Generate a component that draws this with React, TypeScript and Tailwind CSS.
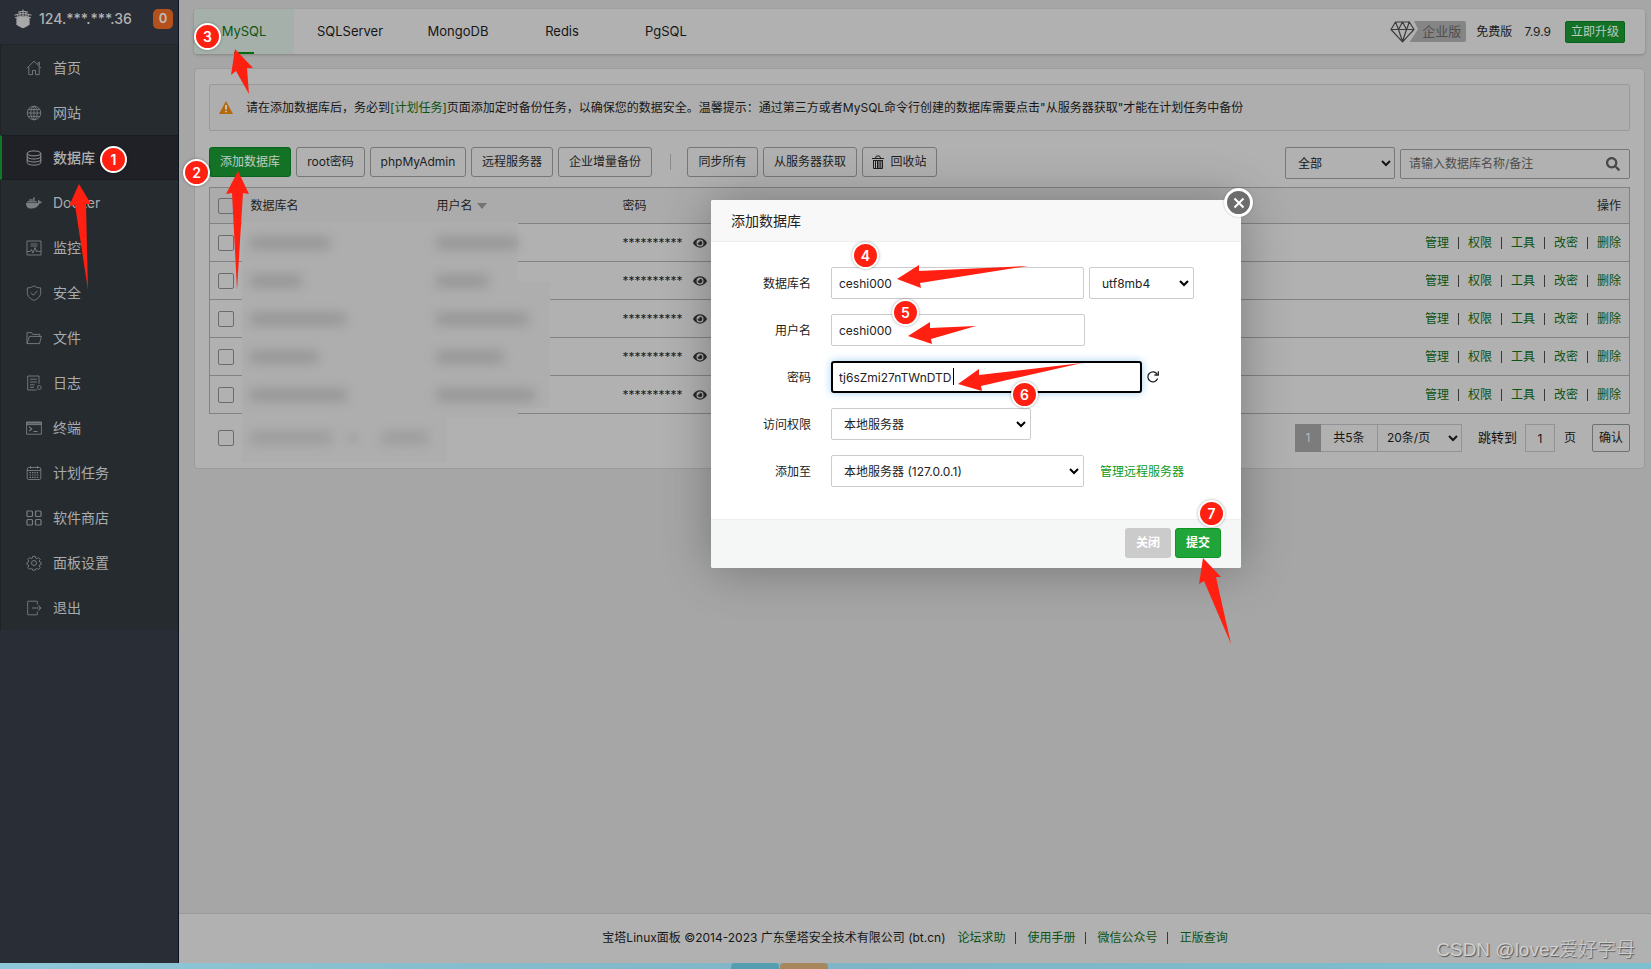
import React, { useState } from "react";
import { FaDocker, FaEye, FaSearch } from "react-icons/fa";

const sans = "font-['Inter','Noto_Sans_CJK_SC',sans-serif]";

function LineIcon({ children }: { children: React.ReactNode }) {
  return (
    <svg viewBox="0 0 16 16" className="size-4 shrink-0" fill="none" stroke="currentColor" strokeWidth="0.9" aria-hidden="true">
      {children}
    </svg>
  );
}

const menu: { label: string; icon: React.ReactNode }[] = [
  { label: "首页", icon: <LineIcon><path d="M.8 8.3 8 1.2l7.2 7.1M2.8 7v7.6h3.7v-4.2h3v4.2h3.7V7M12.2 4.6V2.4h1.2v3.3" /></LineIcon> },
  { label: "网站", icon: <LineIcon><circle cx="8" cy="8" r="6.8" /><ellipse cx="8" cy="8" rx="3.2" ry="6.8" /><path d="M8 1.2v13.6M1.2 8h13.6M2.2 4.6h11.6M2.2 11.4h11.6" /></LineIcon> },
  { label: "数据库", icon: <LineIcon><ellipse cx="8" cy="3.4" rx="6.8" ry="2.5" /><path d="M1.2 3.4v9.2c0 1.4 3 2.5 6.8 2.5s6.8-1.1 6.8-2.5V3.4M1.2 6.5C1.2 7.900 4.200 9 8 9s6.800-1.100 6.800-2.500M1.200 9.500C1.200 10.900 4.200 12 8 12s6.800-1.100 6.800-2.500" /></LineIcon> },
  { label: "Docker", icon: <FaDocker className="size-4 shrink-0" /> },
  { label: "监控", icon: <LineIcon><path d="M1 1h14v14H1zM4.500 4h7M4.500 6h7M1 11.500h3.300l1.200-2 1.500 3.500 2-5.500 1.500 4.500 1-1.500 1 1H15" /></LineIcon> },
  { label: "安全", icon: <LineIcon><path d="M8 .8c2 1.400 4.300 2.100 6.700 2.100v4.600c0 3.600-2.700 6.400-6.700 7.900-4-1.500-6.700-4.300-6.700-7.900V2.900C3.700 2.900 6 2.200 8 .8zM4.800 7.700l2.500 2.500 4.100-4.300" /></LineIcon> },
  { label: "文件", icon: <LineIcon><path d="M1 13.600V2.600h4.600l1.200 1.800h7v2M1 13.600 3.400 6.400h12l-1.900 7.200z" /></LineIcon> },
  { label: "日志", icon: <LineIcon><path d="M13 8.800V1H1.700v14h9M4 4.200h6.800M4 7h6.800M4 9.800h4.500M4 12.300h4" /><circle cx="13.300" cy="12.500" r="1.900" /></LineIcon> },
  { label: "终端", icon: <LineIcon><path d="M.6 2.200h14.800v12H.6z" /><path d="M.6 2.200h14.800v2.400H.6z" fill="currentColor" fillOpacity=".6" /><path d="m3.200 6.700 2.500 2.200-2.500 2.200M7.500 11.500h4" strokeWidth="1.200" /></LineIcon> },
  { label: "计划任务", icon: <LineIcon><rect x="1.200" y="2.500" width="13.600" height="12" rx="1.500" /><path d="M1.200 5.500h13.600M4.500 1v2.500M11.500 1v2.500" /><path d="M3.600 7.700h9M3.600 10h9M3.600 12.300h9" strokeDasharray="1.400 1" strokeWidth="1.200" /></LineIcon> },
  { label: "软件商店", icon: <LineIcon><g strokeWidth="1.200"><rect x="1" y="1" width="5.500" height="5.500" rx="1" /><rect x="9.500" y="1" width="5.500" height="5.500" rx="1" /><rect x="1" y="9.500" width="5.500" height="5.500" rx="1" /><rect x="9.500" y="9.500" width="5.500" height="5.500" rx="1" /></g></LineIcon> },
  { label: "面板设置", icon: <LineIcon><circle cx="8" cy="8" r="2.500" /><path d="M6.700 1.300h2.600l.4 1.800 1.100.5 1.600-1 1.800 1.800-1 1.600.5 1.100 1.500.4v2l-1.500.4-.5 1.100 1 1.600-1.800 1.800-1.600-1-1.100.5-.4 1.300H6.700l-.4-1.300-1.100-.5-1.600 1-1.800-1.800 1-1.600-.5-1.100-1.300-.4v-2l1.300-.4.5-1.100-1-1.600 1.800-1.800 1.600 1 1.100-.5z" /></LineIcon> },
  { label: "退出", icon: <LineIcon><path d="M11.300 4.500V1.200H1.700v13.600h9.600v-3.300M6 8h9M12.300 5.300 15 8l-2.700 2.700" /></LineIcon> },
];

function Chevron({ className = "" }: { className?: string }) {
  return (
    <svg viewBox="0 0 10 8" className={"pointer-events-none absolute top-1/2 h-2 w-2.5 -translate-y-1/2 " + className} fill="none" stroke="currentColor" strokeWidth="2" aria-hidden="true">
      <path d="m1 2 4 4 4-4" />
    </svg>
  );
}

function Sidebar() {
  return (
    <aside className="w-[179px] shrink-0 border-r border-[#08131d] bg-[#292d36]">
      <div className="flex h-[45px] items-center border-b border-[#22262c] pr-[5px] pb-[7px] pl-3.5">
        <svg viewBox="0 0 18 20" className="h-5 w-[18px] shrink-0" fill="#a8a8a8" aria-hidden="true">
          <path d="M2.400 8.800 9 7.300l6.600 1.500v6.500C14.500 17 11.500 18.500 9 19.200 6.500 18.500 3.500 17 2.400 15.300z" />
          <path d="M4 3.200 9 2.200l5 1M.5 6.200C3 5.200 6 4.800 9 4.600c3 .2 6 .6 8.500 1.600M1 8.800 9 6.800l8 2M9 .5v6M6 3v5M12 3v5M3.800 5v3.500M14.200 5v3.500" fill="none" stroke="#a8a8a8" strokeWidth="1" />
        </svg>
        <span className="ml-[7px] text-[14px] font-medium text-[#b0b2b4]">124.***.***.36</span>
        <span className="ml-auto flex size-5 items-center justify-center rounded-[5px] bg-[#b4511d] text-[13px] font-semibold text-[#c4bcb6]">0</span>
      </div>
      <nav className="border-l border-[#202226] bg-[#262b2f]">
        {menu.map((m) => (
          <a
            key={m.label}
            href="#"
            className={
              "flex h-[45px] items-center gap-[11px] text-[14px] " +
              (m.label === "数据库" ? "-ml-px border-y border-l-2 border-y-[#191c21] border-l-[#0d7a24] bg-[#1f2127] pl-6 font-medium text-[#b0b0b0]" : "pl-[25px] text-[#a9acae]")
            }
          >
            <span className={m.label === "数据库" ? "text-[#a0a0a0]" : "text-[#7b7f82]"}>{m.icon}</span>
            {m.label}
          </a>
        ))}
      </nav>
    </aside>
  );
}

const tabs = [
  { label: "MySQL", width: "w-[100px]" },
  { label: "SQLServer", width: "w-[112px]" },
  { label: "MongoDB", width: "w-[104px]" },
  { label: "Redis", width: "w-[104px]" },
  { label: "PgSQL", width: "w-[104px]" },
];

function TopBar() {
  return (
    <header className="flex h-[45px] items-center justify-between rounded bg-[#b1b1b1] pr-5 shadow-[0_1px_3px_rgba(0,0,0,0.22)]">
      <div className="flex h-full">
        {tabs.map((t, i) => (
          <button
            key={t.label}
            type="button"
            className={"relative flex h-full items-center justify-center text-[13px] " + t.width + (i === 0 ? " rounded-l bg-[#a6b0aa] text-[#0b5513]" : " text-[#161616]")}
          >
            {t.label}
            {i === 0 && <span className="absolute bottom-0 left-10 h-0.5 w-5 bg-[#056a0c]" />}
          </button>
        ))}
      </div>
      <div className="flex items-center text-xs text-[#1c1c1c]">
        <div className="flex items-center">
          <svg viewBox="0 0 28 22" className="z-10 h-[22px] w-7" fill="none" stroke="#3c3c3c" strokeWidth="1.200" strokeLinejoin="round" aria-hidden="true">
            <path d="M20 0h4l4 8-9 14h-5z" fill="#b1b1b1" stroke="none" />
            <path d="M5.500 1h13.800L24 8.500 12.500 20.800 1 8.500zM1 8.500h23M5.500 1l3 7.500 4 12 4-12 2.800-7.500M8.500 8.500 12.500 1l4 7.500" />
          </svg>
          <span className="-ml-2.5 flex h-[21px] w-[58px] items-center justify-end rounded-r-xs bg-[#858585] pr-[5px] text-[13px] text-[#505050]">
            企业版
          </span>
        </div>
        <span className="ml-2.5">免费版</span>
        <span className="ml-3">7.9.9</span>
        <button type="button" className="ml-3.5 h-[22px] w-[60px] rounded-xs border border-[#06651a] bg-[#147227] text-xs text-[#bccabf]">
          立即升级
        </button>
      </div>
    </header>
  );
}

const toolButtons = [
  { label: "root密码", width: "w-[69px]" },
  { label: "phpMyAdmin", width: "w-24" },
  { label: "远程服务器", width: "w-[82px]" },
  { label: "企业增量备份", width: "w-[94px]" },
];
const outline = "h-[30px] rounded-[3px] border border-[#777] text-xs text-[#1e1e1e] ";

function Toolbar() {
  return (
    <div className="flex items-start justify-between">
      <div className="flex items-center gap-[5px]">
        <button type="button" className="h-[30px] w-[82px] rounded-[3px] border border-[#06651a] bg-[#147227] text-xs text-[#c0cdc3]">添加数据库</button>
        {toolButtons.map((b) => (
          <button key={b.label} type="button" className={outline + b.width}>{b.label}</button>
        ))}
        <span className="mr-[11px] ml-[13px] h-4 w-px bg-[#8c8c8c]" />
        <button type="button" className={outline + "w-[71px]"}>同步所有</button>
        <button type="button" className={outline + "w-[94px]"}>从服务器获取</button>
        <button type="button" className={outline + "flex w-[75px] items-center justify-center gap-1.5"}>
          <svg viewBox="0 0 12 14" className="h-3.5 w-3" fill="none" stroke="currentColor" aria-hidden="true">
            <path d="M0 3.500h12M1.500 5.500h9M3.500 3l1-2h3l1 2M1.500 5v8.500h9V5M3.500 6v7M5.500 6v7M7 6v7M8.800 6v7" />
          </svg>
          回收站
        </button>
      </div>
      <div className="flex items-end gap-[5px]">
        <div className="relative text-[#161616]">
          <select aria-label="分类" className="h-8 w-[110px] appearance-none rounded-xs border border-[#777] bg-transparent pt-px pl-3 text-xs">
            <option>全部</option>
          </select>
          <Chevron className="right-1" />
        </div>
        <div className="flex h-[30px] w-[230px] items-center rounded-xs border border-[#777] pr-[9px] pl-2">
          <input aria-label="搜索数据库" placeholder="请输入数据库名称/备注" className="w-full min-w-0 bg-transparent text-xs outline-none placeholder:text-[#4c4c4c]" />
          <FaSearch className="size-3.5 shrink-0 text-[#484848]" />
        </div>
      </div>
    </div>
  );
}

function Check({ label }: { label: string }) {
  return <input type="checkbox" aria-label={label} className="block size-4 appearance-none rounded-xs border border-[#6c6c6c]" />;
}

const actions = ["管理", "权限", "工具", "改密", "删除"];

function DatabaseTable() {
  return (
    <table className="w-full table-fixed border-collapse border border-[#828282] text-left text-xs text-[#1e1e1e]">
      <colgroup>
        <col className="w-[33px]" />
        <col className="w-[186px]" />
        <col className="w-[186px]" />
        <col className="w-[186px]" />
        <col />
      </colgroup>
      <thead>
        <tr className="h-9 bg-[#ababab]">
          <th className="pl-2 font-normal"><Check label="全选" /></th>
          <th className="px-2 font-normal">数据库名</th>
          <th className="px-2 font-normal">
            <span className="flex items-center gap-1">
              用户名
              <svg viewBox="0 0 10 6" className="h-1.5 w-2.5" fill="#747474" aria-hidden="true"><path d="M0 0h10L5 6z" /></svg>
            </span>
          </th>
          <th className="px-2 font-normal">密码</th>
          <th className="px-2 text-right font-normal">操作</th>
        </tr>
      </thead>
      <tbody>
        {[1, 2, 3, 4, 5].map((n) => (
          <tr key={n} className="h-[38px] border-t border-[#828282]">
            <td className="pl-2"><Check label={"选择第" + n + "行"} /></td>
            <td />
            <td />
            <td className="px-2">
              <span className="flex items-center gap-2">
                <span className="w-[62px]">**********</span>
                <FaEye className="size-3.5 text-[#2c2c2c]" />
              </span>
            </td>
            <td className="px-2">
              <span className="flex items-center justify-end gap-2">
                {actions.map((a, i) => (
                  <React.Fragment key={a}>
                    {i > 0 && <span className="h-3 w-px bg-[#3a3a3a] mx-px" />}
                    <a href="#" className="text-[#0c5212]">{a}</a>
                  </React.Fragment>
                ))}
              </span>
            </td>
          </tr>
        ))}
      </tbody>
    </table>
  );
}

const smudges = [
  [80, 82],
  [52, 52],
  [96, 92],
  [68, 68],
  [97, 99],
];

function MaskedCells() {
  return (
    <div className="pointer-events-none absolute top-[35px] left-[33px]" aria-hidden="true">
      <div className="h-[60px] w-[276px] bg-[#aeaeae]" />
      <div className="h-[126px] w-[308px] bg-[#aeaeae]" />
      <div className="h-2.5 w-[276px] bg-[#aeaeae]" />
      <div className="h-11 w-[205px] bg-[#aeaeae]" />
      <div className="absolute inset-x-2 top-0.5">
        {smudges.map(([a, b], i) => (
          <div key={i} className="flex h-[38px] items-center">
            <div className="w-[186px] shrink-0"><div className="h-3 bg-[#8e8f90] opacity-80 blur-[6px]" style={{ width: a }} /></div>
            <div className="h-3 shrink-0 bg-[#8e8f90] opacity-80 blur-[6px]" style={{ width: b }} />
          </div>
        ))}
        <div className="flex h-12 items-center">
          <div className="h-3 w-[82px] bg-[#969696] opacity-80 blur-[6px]" />
          <div className="ml-4 h-2.5 w-2.5 bg-[#969696] opacity-50 blur-xs" />
          <div className="ml-6 h-3 w-[46px] bg-[#969696] opacity-80 blur-[6px]" />
        </div>
      </div>
    </div>
  );
}

function Pagination() {
  return (
    <div className="flex items-center justify-between pl-[9px] text-xs text-[#161616]">
      <Check label="批量选择" />
      <div className="flex items-center">
        <span className="flex h-7 w-[26px] items-center justify-center bg-[#7c7c7c] text-[#b9b9b9]">1</span>
        <span className="flex h-7 w-14 items-center justify-center border-y border-[#929292]">共5条</span>
        <div className="relative">
          <select aria-label="每页条数" className="h-7 w-[85px] appearance-none border border-[#929292] bg-transparent pl-[9px]">
            <option>20条/页</option>
          </select>
          <Chevron className="right-1" />
        </div>
        <label htmlFor="jump" className="mr-2 ml-4 text-[13px]">跳转到</label>
        <input id="jump" defaultValue="1" className="h-7 w-[30px] border border-[#929292] bg-transparent text-center" />
        <span className="mx-[9px]">页</span>
        <button type="button" className="ml-[7px] h-7 w-[38px] rounded-xs border border-[#6f6f6f]">确认</button>
      </div>
    </div>
  );
}

const field = "h-8 rounded-xs border border-[#ccc] bg-white text-xs text-[#222] outline-none ";

function FormRow({ id, label, children }: { id: string; label: string; children: React.ReactNode }) {
  return (
    <div className="flex items-center">
      <label htmlFor={id} className="mr-5 w-[100px] pt-px text-right text-xs text-[#222]">{label}</label>
      {children}
    </div>
  );
}

function SelectBox({ id, width, value, name }: { id: string; width: string; value: string; name?: string }) {
  return (
    <div className={"relative " + width}>
      <select id={id} aria-label={name} className={field + "w-full appearance-none pt-px pl-3"}>
        <option>{value}</option>
      </select>
      <Chevron className="right-[5px]" />
    </div>
  );
}

function AddDialog() {
  const [pwd, setPwd] = useState("tj6sZmi27nTWnDTD");
  return (
    <div role="dialog" aria-labelledby="dialog-title" className="absolute top-[200px] left-[711px] w-[530px] rounded-xs bg-white shadow-[1px_1px_50px_rgba(0,0,0,0.3)]">
      <button type="button" aria-label="关闭窗口" className="absolute -top-3 -right-3 flex size-[29px] items-center justify-center rounded-full border-3 border-white bg-[#6d6d6d] shadow-[0_0_2px_rgba(0,0,0,0.3)]">
        <svg viewBox="0 0 12 12" className="size-3" stroke="#fff" strokeWidth="2" aria-hidden="true"><path d="m1.500 1.500 9 9M10.500 1.500l-9 9" /></svg>
      </button>
      <h2 id="dialog-title" className="flex h-[42px] items-center rounded-t-xs border-b border-[#eee] bg-[#f8f8f8] pl-5 text-[14px] text-[#222]">添加数据库</h2>
      <form onSubmit={(e) => e.preventDefault()}>
        <div className="flex flex-col gap-[15px] pt-[25px] pb-8">
          <FormRow id="db" label="数据库名">
            <input id="db" defaultValue="ceshi000" className={field + "w-[253px] pl-[7px]"} />
            <span className="w-[5px]" />
            <SelectBox id="charset" name="字符集" width="w-[105px]" value="utf8mb4" />
          </FormRow>
          <FormRow id="user" label="用户名">
            <input id="user" defaultValue="ceshi000" className={field + "w-[254px] pl-[7px]"} />
          </FormRow>
          <FormRow id="pwd" label="密码">
            <div className="relative">
              <input id="pwd" value={pwd} onChange={(e) => setPwd(e.target.value)} className="h-8 w-[311px] rounded-[3px] border-2 border-black bg-white pl-1.5 text-xs text-[#222] shadow-[0_0_8px_rgba(102,175,233,0.6)] outline-none" />
              <span className="absolute top-[7px] left-[122px] h-[17px] w-px bg-black" />
            </div>
            <svg viewBox="0 0 12 12" className="ml-[5px] size-3" fill="none" stroke="#222" strokeWidth="1.300" aria-hidden="true">
              <path d="M10.600 7.600A5 5 0 1 1 10.200 3.300" /><path d="M7.400 4h3.900V.3" />
            </svg>
          </FormRow>
          <FormRow id="access" label="访问权限">
            <SelectBox id="access" width="w-[200px]" value="本地服务器" />
          </FormRow>
          <FormRow id="server" label="添加至">
            <SelectBox id="server" width="w-[253px]" value="本地服务器 (127.0.0.1)" />
            <a href="#" className="ml-4 pt-px text-xs text-[#109a22]">管理远程服务器</a>
          </FormRow>
        </div>
        <div className="flex h-[49px] items-center justify-end gap-1 rounded-b-xs border-t border-[#edf0ef] bg-[#f5f7f7] pr-5 pb-0.5">
          <button type="button" className="h-[30px] w-[46px] rounded-[3px] bg-[#cbcbcb] text-xs font-bold text-white">关闭</button>
          <button type="submit" className="h-[30px] w-[46px] rounded-[3px] border border-[#109520] bg-[#20a53a] text-xs font-bold text-white">提交</button>
        </div>
      </form>
    </div>
  );
}

const arrows = [
  "79,184 91,204 86,204 88,290 75,205 69,206",
  "238,171 249,194 243,193 237,290 232,193 226,194",
  "235,49 253,68 247,68 249,94 236,71 231,75",
  "897,279 919,265 919,271 1028,266 920,283 921,288",
  "908,336 930,322 930,328 976,326 931,339 932,344",
  "958,384 979,369 979,375 1082,363 981,386 982,391",
  "1203,558 1221,577 1216,577 1231,644 1204,581 1199,584",
];

const steps = [
  "left-[100px] top-[146px]",
  "left-[183px] top-[159px]",
  "left-[194px] top-[23px]",
  "left-[852px] top-[242px]",
  "left-[892px] top-[299px]",
  "left-[1011px] top-[381px]",
  "left-[1198px] top-[500px]",
];

function Annotations() {
  return (
    <div className="pointer-events-none absolute top-0 left-0">
      <svg width="1" height="1" className="overflow-visible" fill="#ff2012" aria-hidden="true">
        {arrows.map((p) => <polygon key={p} points={p} />)}
      </svg>
      {steps.map((pos, i) => (
        <span key={pos} className={"absolute flex size-[27px] items-center justify-center rounded-full border-2 border-white bg-[#ff2012] text-[14px] font-semibold text-white shadow-[0_0_3px_rgba(0,0,0,0.35)] " + pos}>
          {i + 1}
        </span>
      ))}
    </div>
  );
}

const footLinks = ["论坛求助", "使用手册", "微信公众号", "正版查询"];

export default function App() {
  return (
    <div className={"relative flex min-h-screen flex-col overflow-hidden bg-[#a6a6a6] " + sans}>
      <div className="flex flex-1">
        <Sidebar />
        <div className="flex min-w-0 flex-1 flex-col">
          <main className="flex flex-1 flex-col gap-[14px] pt-[9px] pr-1.5 pl-[15px]">
            <TopBar />
            <section className="rounded border border-[#9b9b9b] bg-[#b1b1b1] px-3.5 pt-[15px] pb-4">
              <div className="mb-4 flex h-[47px] items-center gap-[13px] rounded-xs border border-[#999] bg-[#aeaeae] pl-[9px] text-xs text-[#161616]">
                <svg viewBox="0 0 14 13" className="h-[13px] w-3.5" aria-hidden="true">
                  <path d="M7 0l7 13H0z" fill="#b5690c" />
                  <path d="M7 4v4.500M7 9.700v1.600" stroke="#ccc" strokeWidth="1.700" />
                </svg>
                <p>
                  请在添加数据库后，务必到<a href="#" className="text-[#0c5212]">[计划任务]</a>页面添加定时备份任务，以确保您的数据安全。温馨提示：通过第三方或者MySQL命令行创建的数据库需要点击"从服务器获取"才能在计划任务中备份
                </p>
              </div>
              <Toolbar />
              <div className="relative mt-2 mb-2.5">
                <DatabaseTable />
                <MaskedCells />
              </div>
              <Pagination />
            </section>
          </main>
          <footer className="flex h-[50px] items-center justify-center border-t border-[#999] bg-[#b1b1b1] pb-0.5 text-xs text-[#161616]">
            <span className="mr-3">宝塔Linux面板 ©2014-2023 广东堡塔安全技术有限公司 (bt.cn)</span>
            {footLinks.map((l, i) => (
              <React.Fragment key={l}>
                {i > 0 && <span className="mr-3 ml-[9px] h-3 w-px bg-[#3a3a3a]" />}
                <a href="#" className="text-[#0c5212]">{l}</a>
              </React.Fragment>
            ))}
          </footer>
        </div>
      </div>
      <div className="flex h-1.5 bg-linear-to-r from-[#8fc8d8] via-[#7fb5c6] to-[#7cc0cf] pl-[731px]">
        <span className="h-full w-12 rounded-t bg-[#559db0]" />
        <span className="ml-px h-full w-12 rounded-t bg-[#a8875c]" />
      </div>
      <AddDialog />
      <Annotations />
      <span className="absolute right-4 bottom-[5px] font-['Liberation_Sans','Noto_Sans_CJK_SC',sans-serif] text-[19px] font-light text-[#d0d0d0] [text-shadow:1px_1px_1px_#555]">
        CSDN @lovez爱好字母
      </span>
    </div>
  );
}
